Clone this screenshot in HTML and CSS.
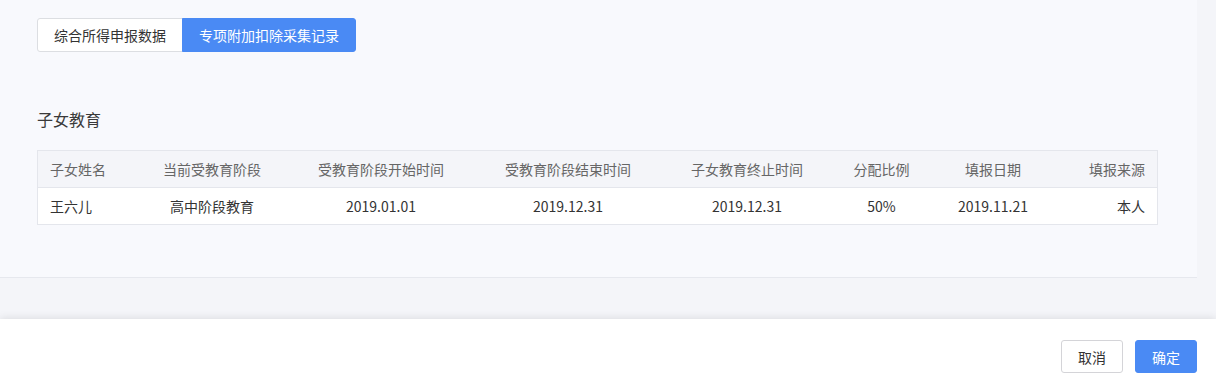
FILE: index.html
```html
<!DOCTYPE html>
<html lang="zh-CN">
<head>
<meta charset="utf-8">
<title>专项附加扣除采集记录</title>
<link rel="stylesheet" href="styles.css">
</head>
<body>
<div class="page">
  <main class="panel">
    <div class="tabs">
      <button class="tab">综合所得申报数据</button>
      <button class="tab tab-active">专项附加扣除采集记录</button>
    </div>
    <h2 class="section-title">子女教育</h2>
    <table class="grid">
      <colgroup>
        <col class="c1"><col class="c2"><col class="c3"><col class="c4">
        <col class="c5"><col class="c6"><col class="c7"><col class="c8">
      </colgroup>
      <thead>
        <tr>
          <th class="left">子女姓名</th>
          <th>当前受教育阶段</th>
          <th>受教育阶段开始时间</th>
          <th>受教育阶段结束时间</th>
          <th>子女教育终止时间</th>
          <th>分配比例</th>
          <th>填报日期</th>
          <th class="right">填报来源</th>
        </tr>
      </thead>
      <tbody>
        <tr>
          <td class="left">王六儿</td>
          <td>高中阶段教育</td>
          <td>2019.01.01</td>
          <td>2019.12.31</td>
          <td>2019.12.31</td>
          <td>50%</td>
          <td>2019.11.21</td>
          <td class="right">本人</td>
        </tr>
      </tbody>
    </table>
  </main>
</div>
<footer class="footer">
  <button class="btn">取消</button>
  <button class="btn btn-primary">确定</button>
</footer>
</body>
</html>
```
FILE: styles.css
```css
* { box-sizing: border-box; }
html, body { margin: 0; padding: 0; }
body {
  height: 386px;
  background: #f4f5f9;
  font-family: "Noto Sans CJK SC", "Noto Sans", sans-serif;
  color: #333;
  display: flex;
  flex-direction: column;
  overflow: hidden;
}
.page {
  display: flex;
  flex: 1;
}
.panel {
  width: 1197px;
  height: 278px;
  background: #f8f9fd;
  border-bottom: 1px solid #e6e8ee;
  padding: 18px 40px 0 37px;
}
.tabs {
  display: flex;
}
.tab {
  height: 34px;
  padding: 0 16px;
  font: inherit;
  font-size: 14px;
  color: #333;
  background: #fff;
  border: 1px solid #dcdee2;
  cursor: pointer;
  line-height: 32px;
}
.tab:first-child { border-radius: 3px 0 0 3px; }
.tab + .tab { margin-left: -1px; }
.tab-active {
  background: #4a8af4;
  border-color: #4a8af4;
  color: #fff;
  border-radius: 0 3px 3px 0;
}
.section-title {
  margin: 55px 0 19px;
  font-size: 16px;
  line-height: 24px;
  font-weight: normal;
  color: #3a3a3a;
}
.grid {
  width: 1120px;
  table-layout: fixed;
  border-collapse: collapse;
  border: 1px solid #e4e6ec;
  font-size: 14px;
}
.c1 { width: 92px; }
.c2 { width: 165px; }
.c3 { width: 173px; }
.c4 { width: 201px; }
.c5 { width: 157px; }
.c6 { width: 112px; }
.c7 { width: 111px; }
.c8 { width: 109px; }
.grid th, .grid td {
  height: 37px;
  padding: 0 12px;
  text-align: center;
  white-space: nowrap;
  font-weight: normal;
}
.grid th {
  background: #f4f5f9;
  color: #666;
  border-bottom: 1px solid #e4e6ec;
}
.grid td {
  background: #fff;
  color: #333;
}
.grid .left { text-align: left; }
.grid .right { text-align: right; }
.footer {
  height: 67px;
  background: #fff;
  box-shadow: 0 -1px 8px rgba(0, 0, 0, 0.1);
  display: flex;
  justify-content: flex-end;
  align-items: flex-start;
  gap: 12px;
  padding: 21px 19px 0 0;
  position: relative;
}
.btn {
  width: 62px;
  height: 33px;
  font: inherit;
  font-size: 14px;
  color: #333;
  background: #fff;
  border: 1px solid #d4d4d8;
  border-radius: 3px;
  cursor: pointer;
  padding: 0;
}
.btn-primary {
  background: #4a8af4;
  border-color: #4a8af4;
  color: #fff;
}
```
